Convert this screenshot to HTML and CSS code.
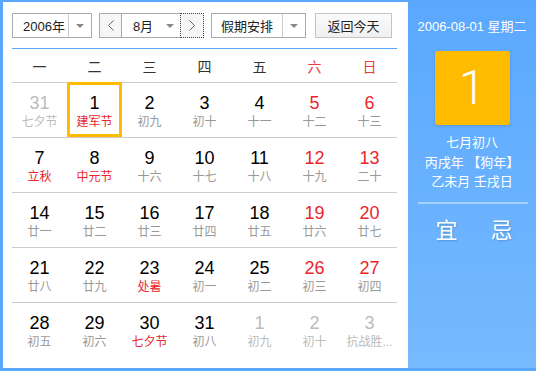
FILE: index.html
```html
<!DOCTYPE html>
<html lang="zh-CN">

<head>
    <meta charset="UTF-8">
    <meta name="viewport" content="width=device-width, initial-scale=1.0">
    <title>万年历</title>
    <link rel="stylesheet" href="styles.css">
</head>

<body>
    <div class="calendar">
        <div class="cal-main">
            <div class="toolbar">
                <div class="select select-year">
                    <span class="select-label">2006年</span>
                    <span class="select-arrow"></span>
                </div>
                <div class="month-group">
                    <button class="nav-btn">
                        <svg width="6" height="11" viewBox="0 0 6 11"><polyline points="5.5,0.5 0.5,5.5 5.5,10.5" fill="none" stroke="#666" stroke-width="1"/></svg>
                    </button>
                    <div class="select select-month">
                        <span class="select-label">8月</span>
                        <span class="select-arrow no-line"></span>
                    </div>
                    <button class="nav-btn is-focus">
                        <svg width="6" height="11" viewBox="0 0 6 11"><polyline points="0.5,0.5 5.5,5.5 0.5,10.5" fill="none" stroke="#666" stroke-width="1"/></svg>
                    </button>
                </div>
                <div class="select select-holiday">
                    <span class="select-label">假期安排</span>
                    <span class="select-arrow"></span>
                </div>
                <button class="today-btn">返回今天</button>
            </div>

            <div class="week-head">
                <span>一</span>
                <span>二</span>
                <span>三</span>
                <span>四</span>
                <span>五</span>
                <span class="weekend">六</span>
                <span class="weekend">日</span>
            </div>

            <div class="days">
                <div class="day other"><div class="day-num">31</div><div class="day-lunar">七夕节</div></div>
                <div class="day is-today"><div class="day-num">1</div><div class="day-lunar festival">建军节</div></div>
                <div class="day"><div class="day-num">2</div><div class="day-lunar">初九</div></div>
                <div class="day"><div class="day-num">3</div><div class="day-lunar">初十</div></div>
                <div class="day"><div class="day-num">4</div><div class="day-lunar">十一</div></div>
                <div class="day weekend"><div class="day-num">5</div><div class="day-lunar">十二</div></div>
                <div class="day weekend"><div class="day-num">6</div><div class="day-lunar">十三</div></div>

                <div class="day"><div class="day-num">7</div><div class="day-lunar festival">立秋</div></div>
                <div class="day"><div class="day-num">8</div><div class="day-lunar festival">中元节</div></div>
                <div class="day"><div class="day-num">9</div><div class="day-lunar">十六</div></div>
                <div class="day"><div class="day-num">10</div><div class="day-lunar">十七</div></div>
                <div class="day"><div class="day-num">11</div><div class="day-lunar">十八</div></div>
                <div class="day weekend"><div class="day-num">12</div><div class="day-lunar">十九</div></div>
                <div class="day weekend"><div class="day-num">13</div><div class="day-lunar">二十</div></div>

                <div class="day"><div class="day-num">14</div><div class="day-lunar">廿一</div></div>
                <div class="day"><div class="day-num">15</div><div class="day-lunar">廿二</div></div>
                <div class="day"><div class="day-num">16</div><div class="day-lunar">廿三</div></div>
                <div class="day"><div class="day-num">17</div><div class="day-lunar">廿四</div></div>
                <div class="day"><div class="day-num">18</div><div class="day-lunar">廿五</div></div>
                <div class="day weekend"><div class="day-num">19</div><div class="day-lunar">廿六</div></div>
                <div class="day weekend"><div class="day-num">20</div><div class="day-lunar">廿七</div></div>

                <div class="day"><div class="day-num">21</div><div class="day-lunar">廿八</div></div>
                <div class="day"><div class="day-num">22</div><div class="day-lunar">廿九</div></div>
                <div class="day"><div class="day-num">23</div><div class="day-lunar festival">处暑</div></div>
                <div class="day"><div class="day-num">24</div><div class="day-lunar">初一</div></div>
                <div class="day"><div class="day-num">25</div><div class="day-lunar">初二</div></div>
                <div class="day weekend"><div class="day-num">26</div><div class="day-lunar">初三</div></div>
                <div class="day weekend"><div class="day-num">27</div><div class="day-lunar">初四</div></div>

                <div class="day"><div class="day-num">28</div><div class="day-lunar">初五</div></div>
                <div class="day"><div class="day-num">29</div><div class="day-lunar">初六</div></div>
                <div class="day"><div class="day-num">30</div><div class="day-lunar festival">七夕节</div></div>
                <div class="day"><div class="day-num">31</div><div class="day-lunar">初八</div></div>
                <div class="day other"><div class="day-num">1</div><div class="day-lunar">初九</div></div>
                <div class="day other"><div class="day-num">2</div><div class="day-lunar">初十</div></div>
                <div class="day other"><div class="day-num">3</div><div class="day-lunar">抗战胜...</div></div>
            </div>
        </div>

        <div class="cal-side">
            <div class="side-date">2006-08-01 星期二</div>
            <div class="side-day">1</div>
            <div class="side-lunar">
                <div>七月初八</div>
                <div>丙戌年 【狗年】</div>
                <div>乙未月 壬戌日</div>
            </div>
            <div class="side-line"></div>
            <div class="side-yiji">
                <span>宜</span>
                <span>忌</span>
            </div>
        </div>
    </div>
</body>

</html>
```

FILE: styles.css
```css
* {
    margin: 0;
    padding: 0;
    box-sizing: border-box;
}

body {
    font-family: "Liberation Sans", "Noto Sans CJK SC", sans-serif;
    background: #fff;
}

.calendar {
    display: flex;
    width: 536px;
    height: 371px;
    border: 3px solid #5aa8fe;
    border-top-width: 2px;
    border-right: 0;
}

.cal-main {
    width: 405px;
    background: #fff;
    padding: 11px 11px 0 9px;
}

/* toolbar */

.toolbar {
    display: flex;
    height: 25px;
}

.select {
    display: flex;
    height: 25px;
    border: 1px solid #aaa;
    background: #fff;
    font-size: 13px;
    color: #222;
}

.select-label {
    flex: 1;
    display: flex;
    align-items: center;
    justify-content: center;
}

.select-arrow {
    width: 23px;
    border-left: 1px solid #ccc;
    display: flex;
    align-items: center;
    justify-content: center;
}

.select-arrow.no-line {
    border-left: 0;
    width: 20px;
}

.select-arrow::after {
    content: '';
    border-left: 4px solid transparent;
    border-right: 4px solid transparent;
    border-top: 4px solid #888;
}

.select-year {
    width: 80px;
}

.select-year .select-label {
    justify-content: flex-start;
    padding-left: 10px;
}

.month-group {
    display: flex;
    margin-left: 7px;
}

.nav-btn {
    width: 23px;
    height: 25px;
    border: 1px solid #aaa;
    background: #f6f6f6;
    display: flex;
    align-items: center;
    justify-content: center;
}

.nav-btn.is-focus {
    width: 24px;
    border: 1px dotted #444;
}

.select-month {
    width: 58px;
    border-left: 0;
    border-right: 0;
}

.select-month .select-label {
    padding-left: 4px;
}

.select-holiday {
    width: 95px;
    margin-left: 7px;
}

.today-btn {
    width: 77px;
    height: 25px;
    margin-left: 9px;
    border: 1px solid #c4c4c4;
    background: linear-gradient(#fbfbfb, #f0f0f0);
    font-family: inherit;
    font-size: 13px;
    color: #222;
}

/* grid */

.week-head {
    display: grid;
    grid-template-columns: repeat(7, 55px);
    margin-top: 10px;
    height: 34px;
    border-top: 1px solid #5aa8fe;
    align-items: center;
    text-align: center;
    font-size: 14px;
    color: #333;
}

.week-head .weekend {
    color: #ea3a3f;
}

.days {
    display: grid;
    grid-template-columns: repeat(7, 55px);
}

.day {
    height: 55px;
    border-top: 1px solid #ccc;
    padding-top: 9px;
    text-align: center;
}

.day-num {
    font-size: 18px;
    line-height: 22px;
    color: #000;
}

.day-lunar {
    font-size: 12px;
    line-height: 16px;
    color: #999;
    white-space: nowrap;
}

.day.weekend .day-num {
    color: #e8262c;
}

.day-lunar.festival {
    color: #e8262c;
}

.day.other .day-num,
.day.other .day-lunar {
    color: #bbb;
}

.day.is-today {
    border: 3px solid #ffbb00;
    padding-top: 7px;
}

/* side panel */

.cal-side {
    flex: 1;
    background: linear-gradient(#5aa8fe, #76baff);
    color: #fff;
    text-align: center;
    padding-top: 16px;
}

.side-date {
    font-size: 13px;
    line-height: 18px;
}

.side-day {
    width: 75px;
    height: 74px;
    margin: 15px auto 0;
    background: #ffbb00;
    border-radius: 3px;
    box-shadow: 0 1px 3px rgba(0, 0, 0, 0.15);
    font-family: Roboto, "Liberation Sans", sans-serif;
    font-weight: 300;
    font-size: 48px;
    line-height: 74px;
}

.side-lunar {
    margin-top: 8px;
    font-size: 13px;
    line-height: 19.5px;
}

.side-line {
    height: 2px;
    margin: 10px 8px 0 10px;
    background: rgba(255, 255, 255, 0.4);
}

.side-yiji {
    display: flex;
    justify-content: center;
    gap: 33px;
    margin-top: 13px;
    padding-left: 4px;
    font-size: 22px;
    line-height: 28px;
    text-shadow: 1px 1px 2px rgba(0, 0, 0, 0.2);
}
```
